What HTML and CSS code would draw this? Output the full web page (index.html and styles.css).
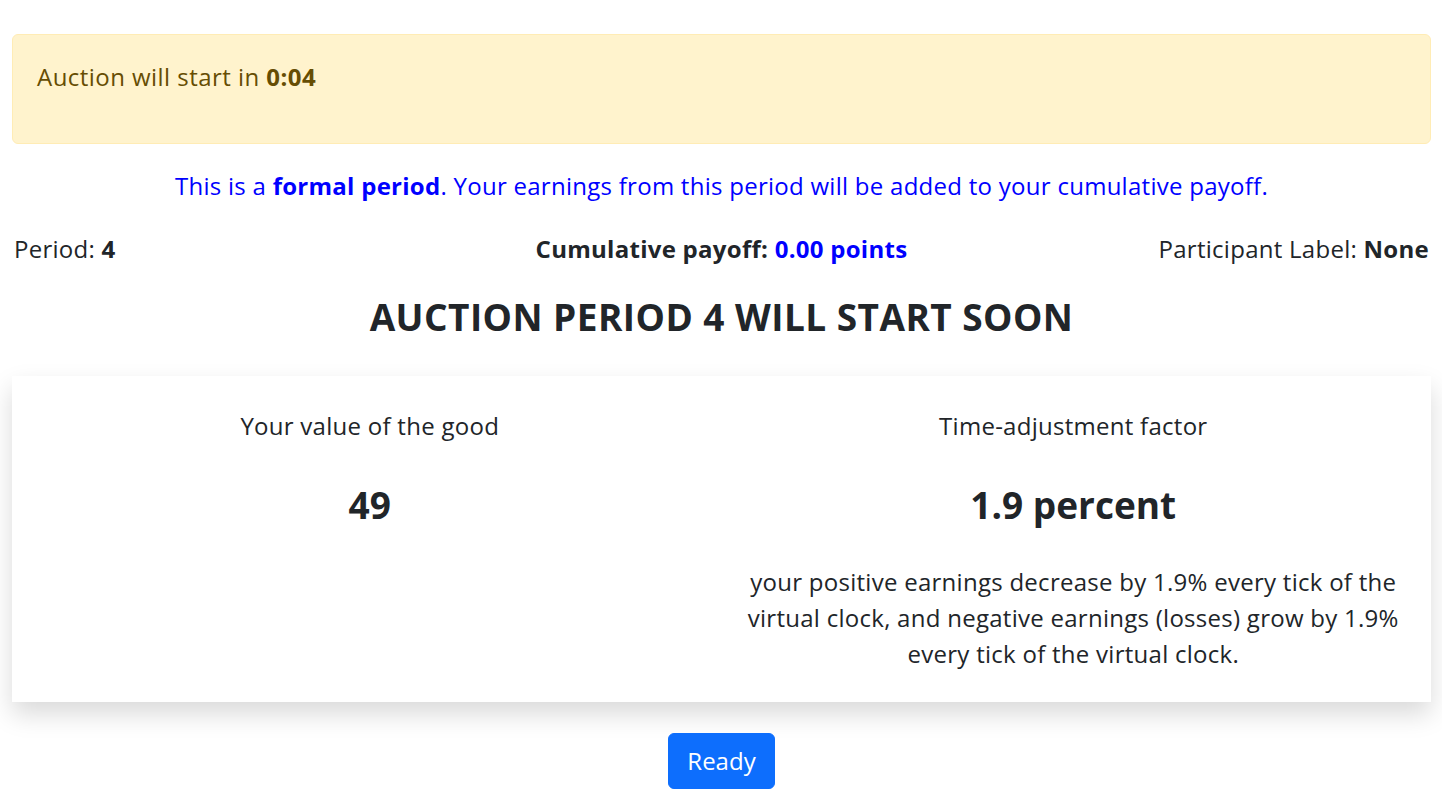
FILE: index.html
```html
<!DOCTYPE html>
<html lang="en">
<head>
<meta charset="utf-8">
<title>Auction</title>
<link rel="stylesheet" href="styles.css">
</head>
<body>
<div class="page">
  <div class="alert">
    <p>Auction will start in <strong>0:04</strong></p>
  </div>
  <p class="notice">This is a <strong>formal period</strong>. Your earnings from this period will be added to your cumulative payoff.</p>
  <div class="status">
    <div class="status-left">Period: <strong>4</strong></div>
    <div class="status-center"><strong>Cumulative payoff: <span class="blue">0.00 points</span></strong></div>
    <div class="status-right">Participant Label: <strong>None</strong></div>
  </div>
  <h3 class="heading">AUCTION PERIOD 4 WILL START SOON</h3>
  <div class="card">
    <div class="col">
      <div class="label">Your value of the good</div>
      <div class="value">49</div>
    </div>
    <div class="col">
      <div class="label">Time-adjustment factor</div>
      <div class="value">1.9 percent</div>
      <p class="desc">your positive earnings decrease by 1.9% every tick of the virtual clock, and negative earnings (losses) grow by 1.9% every tick of the virtual clock.</p>
    </div>
  </div>
  <div class="actions">
    <button class="btn">Ready</button>
  </div>
</div>
</body>
</html>
```

FILE: styles.css
```css
* { box-sizing: border-box; }
html, body { margin: 0; padding: 0; background: #fff; }
body {
  font-family: "Open Sans", "Noto Sans", sans-serif;
  font-stretch: 92%;
  font-size: 24px;
  line-height: 36px;
  letter-spacing: 0.27px;
  color: #212529;
}
.page { padding: 34px 11px 0 12px; }
.alert {
  background: #fff3cd;
  border: 1px solid #ffecb5;
  border-radius: 6px;
  color: #664d03;
  padding: 24px;
  margin-bottom: 24px;
}
.alert p { margin: 0 0 24px; letter-spacing: 0.45px; }
.notice {
  text-align: center;
  color: #0000ff;
  margin: 0 0 27px;
}
.status {
  display: grid;
  grid-template-columns: 1fr 1fr 1fr;
  padding: 0 2px;
}
.status-left { text-align: left; }
.status-center { text-align: center; }
.status-right { text-align: right; }
.blue { color: #0000ff; }
.heading {
  text-align: center;
  font-size: 37px;
  line-height: 47px;
  letter-spacing: 0.45px;
  font-weight: 700;
  margin: 26px 0 36px;
}
.card {
  display: grid;
  grid-template-columns: 1fr 1fr;
  padding: 32px 6px 29px;
  background: #fff;
  box-shadow: 0 12px 24px rgba(0,0,0,0.15);
  height: 326px;
}
.col { text-align: center; padding: 0 15px; }
.value {
  font-size: 37px;
  line-height: 50px;
  letter-spacing: 0;
  font-weight: 700;
  margin: 36px 0 34px;
}
.desc { margin: 0; }
.actions { display: flex; justify-content: center; padding-top: 31px; }
.btn {
  font: inherit;
  background: #0d6efd;
  color: #fff;
  border: 1px solid #0d6efd;
  border-radius: 6px;
  padding: 9px 18px;
  line-height: 36px;
  cursor: pointer;
}
```
